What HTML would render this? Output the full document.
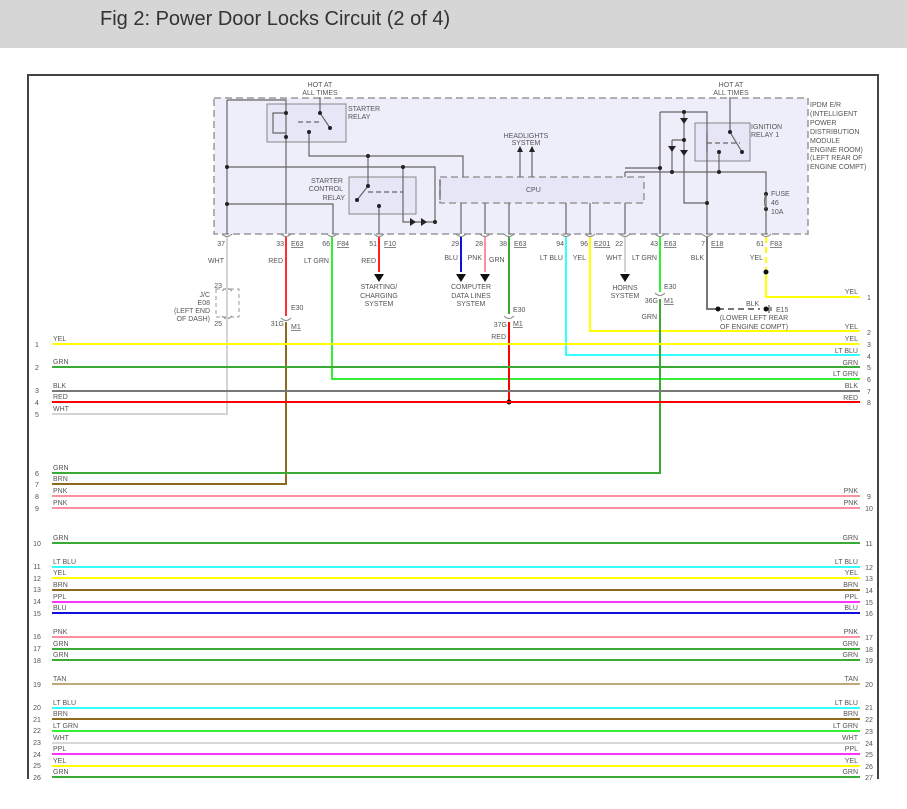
<!DOCTYPE html>
<html><head><meta charset="utf-8"><style>
html,body{margin:0;padding:0;background:#fff;width:907px;height:809px;overflow:hidden}
.hd{position:absolute;left:0;top:0;width:907px;height:48px;background:#d6d6d6}
.hd span{position:absolute;left:100px;top:8px;font:20px "Liberation Sans",sans-serif;color:#333}
svg{position:absolute;left:0;top:0}
text{font-family:"Liberation Sans",sans-serif;font-size:7px;fill:#555}
</style></head><body>
<div class="hd"><span>Fig 2: Power Door Locks Circuit (2 of 4)</span></div>
<svg width="907" height="809" viewBox="0 0 907 809">
<path d="M28,779 V75 H878 V779" fill="none" stroke="#444" stroke-width="2"/>
<rect x="214" y="98" width="594" height="136" fill="#eeeefa" stroke="#999" stroke-width="1.5" stroke-dasharray="7,4"/>
<rect x="440" y="177" width="204" height="26" fill="#e6e6f7" stroke="#999" stroke-width="1.5" stroke-dasharray="7,4"/>
<text x="526" y="192">CPU</text>
<rect x="267" y="104" width="79" height="38" fill="#e6e6f7" stroke="#888"/>
<rect x="349" y="177" width="67" height="37" fill="#e6e6f7" stroke="#888"/>
<rect x="695" y="123" width="55" height="38" fill="#e6e6f7" stroke="#888"/>
<g fill="none" stroke="#666" stroke-width="1.2">
<path d="M227,100 H286 V234 M227,100 V234"/>
<path d="M227,167 H435 V222 H403 V167 M227,204 H333 V234"/>
<path d="M309,132 V156 H463 V177 M368,156 V186 L357,200 M379,206 V234"/>
<path d="M320,97 V113 L330,128 M286,113 H273 V133 H286" />
<path d="M298,122 H322" stroke-dasharray="5,3"/>
<path d="M368,192 H403" stroke-dasharray="5,3"/>
<path d="M520,147 V177 M532,147 V177"/>
<path d="M461,203 V234 M485,203 V234 M509,203 V234 M566,203 V234 M590,203 V234 M625,203 V234 M625,172 V177"/>
<path d="M625,168 H660 M660,112 V234 M660,112 H707 V234 M684,112 V203 H707 M672,140 H684 M672,140 V172 M625,172 H766 V234"/>
<path d="M730,97 V132 L742,152 M719,152 V172 M707,132 V152"/>
<path d="M707,143 H740" stroke-dasharray="5,3"/>
<path d="M440,180 V200"/>
</g>
<g fill="#222">
<circle cx="286" cy="113" r="2"/><circle cx="286" cy="137" r="2"/><circle cx="309" cy="132" r="2"/><circle cx="320" cy="113" r="2"/><circle cx="330" cy="128" r="2"/>
<circle cx="227" cy="167" r="2"/><circle cx="227" cy="204" r="2"/><circle cx="368" cy="156" r="2"/><circle cx="403" cy="167" r="2"/><circle cx="435" cy="222" r="2"/>
<circle cx="368" cy="186" r="2"/><circle cx="357" cy="200" r="2"/><circle cx="379" cy="206" r="2"/>
<circle cx="684" cy="112" r="2"/><circle cx="684" cy="140" r="2"/><circle cx="660" cy="168" r="2"/><circle cx="672" cy="172" r="2"/><circle cx="719" cy="172" r="2"/><circle cx="707" cy="203" r="2"/>
<circle cx="730" cy="132" r="2"/><circle cx="742" cy="152" r="2"/><circle cx="719" cy="152" r="2"/>
<circle cx="766" cy="194" r="2"/><circle cx="766" cy="209" r="2"/>
<path d="M410,218 L416,222 L410,226Z M421,218 L427,222 L421,226Z M680,118 L688,118 L684,124Z M668,146 L676,146 L672,152Z M680,150 L688,150 L684,156Z"/>
<path d="M517,152 L520,146 L523,152Z M529,152 L532,146 L535,152Z"/>
</g>
<path d="M766,194 q-3,7 0,15" fill="none" stroke="#666"/>
<g fill="none" stroke="#888" stroke-width="1">
<path d="M222,234 q5,5 10,0 M281,234 q5,5 10,0 M327,234 q5,5 10,0 M374,234 q5,5 10,0 M456,234 q5,5 10,0 M480,234 q5,5 10,0 M504,234 q5,5 10,0 M561,234 q5,5 10,0 M585,234 q5,5 10,0 M620,234 q5,5 10,0 M655,234 q5,5 10,0 M702,234 q5,5 10,0 M761,234 q5,5 10,0"/>
<path d="M281,318 q5,5 10,0 M504,316 q5,5 10,0 M655,293 q5,5 10,0 M222,291 q5,-5 10,0 M222,316 q5,5 10,0"/>
</g>
<rect x="216" y="289" width="23" height="28" fill="none" stroke="#999" stroke-dasharray="4,3"/>
<g fill="none" stroke-width="2">
<path d="M227,237 V414 H52" stroke="#d4d4d4"/>
<path d="M286,237 V316" stroke="#ff3030"/>
<path d="M286,322 V484 H52" stroke="#8b6a1e"/>
<path d="M332,237 V379 H860" stroke="#33ee33"/>
<path d="M379,237 V272" stroke="#ff2020"/>
<path d="M461,237 V272" stroke="#1010dd"/>
<path d="M485,237 V272" stroke="#ff8fa3"/>
<path d="M509,237 V314" stroke="#3aaa35"/>
<path d="M509,322 V402" stroke="#ff0000"/>
<path d="M566,237 V355 H860" stroke="#33ffff"/>
<path d="M590,237 V331 H860" stroke="#ffff00"/>
<path d="M625,237 V272" stroke="#d4d4d4"/>
<path d="M660,237 V292" stroke="#33ee33"/>
<path d="M660,299 V473 H52" stroke="#3aaa35"/>
<path d="M707,237 V309 H718" stroke="#777"/>
<path d="M718,309 H760" stroke="#777" stroke-dasharray="6,4"/>
<path d="M766,237 V272" stroke="#ffff00" stroke-dasharray="6,4"/>
<path d="M766,272 V297 H860" stroke="#ffff00"/>
</g>
<g fill="#111">
<path d="M374,274 L384,274 L379,282Z M456,274 L466,274 L461,282Z M480,274 L490,274 L485,282Z M620,274 L630,274 L625,282Z"/>
<circle cx="509" cy="402" r="2.5"/><circle cx="766" cy="272" r="2.5"/><circle cx="718" cy="309" r="2.5"/><circle cx="766" cy="309" r="2.5"/>
</g>
<path d="M769,305 V313 M771,307 V311" stroke="#333"/>
<g stroke-width="2">
<path d="M52,344 H860" stroke="#ffff00"/>
<path d="M52,367 H860" stroke="#3aaa35"/>
<path d="M52,391 H860" stroke="#777"/>
<path d="M52,402 H860" stroke="#ff0000"/>
<path d="M52,496 H860" stroke="#ff8fa3"/>
<path d="M52,508 H860" stroke="#ff8fa3"/>
<path d="M52,543 H860" stroke="#3aaa35"/>
<path d="M52,567 H860" stroke="#33ffff"/>
<path d="M52,578 H860" stroke="#ffff00"/>
<path d="M52,590 H860" stroke="#8b6a1e"/>
<path d="M52,602 H860" stroke="#ff33ff"/>
<path d="M52,613 H860" stroke="#1010dd"/>
<path d="M52,637 H860" stroke="#ff8fa3"/>
<path d="M52,649 H860" stroke="#3aaa35"/>
<path d="M52,660 H860" stroke="#3aaa35"/>
<path d="M52,684 H860" stroke="#bba977"/>
<path d="M52,708 H860" stroke="#33ffff"/>
<path d="M52,719 H860" stroke="#8b6a1e"/>
<path d="M52,731 H860" stroke="#33ee33"/>
<path d="M52,743 H860" stroke="#d8d8d8"/>
<path d="M52,754 H860" stroke="#ff33ff"/>
<path d="M52,766 H860" stroke="#ffff00"/>
<path d="M52,777 H860" stroke="#3aaa35"/>
</g>
<g>
<text x="53" y="341">YEL</text><text x="53" y="364">GRN</text><text x="53" y="388">BLK</text><text x="53" y="399">RED</text><text x="53" y="411">WHT</text>
<text x="53" y="470">GRN</text><text x="53" y="481">BRN</text><text x="53" y="493">PNK</text><text x="53" y="505">PNK</text><text x="53" y="540">GRN</text>
<text x="53" y="564">LT BLU</text><text x="53" y="575">YEL</text><text x="53" y="587">BRN</text><text x="53" y="599">PPL</text><text x="53" y="610">BLU</text>
<text x="53" y="634">PNK</text><text x="53" y="646">GRN</text><text x="53" y="657">GRN</text><text x="53" y="681">TAN</text>
<text x="53" y="705">LT BLU</text><text x="53" y="716">BRN</text><text x="53" y="728">LT GRN</text><text x="53" y="740">WHT</text><text x="53" y="751">PPL</text><text x="53" y="763">YEL</text><text x="53" y="774">GRN</text>
<text x="489" y="262">GRN</text>
</g>
<g text-anchor="middle">
<text x="37" y="347">1</text><text x="37" y="370">2</text><text x="37" y="393">3</text><text x="37" y="405">4</text><text x="37" y="417">5</text><text x="37" y="476">6</text><text x="37" y="487">7</text><text x="37" y="499">8</text><text x="37" y="511">9</text><text x="37" y="546">10</text>
<text x="37" y="569">11</text><text x="37" y="581">12</text><text x="37" y="592">13</text><text x="37" y="604">14</text><text x="37" y="616">15</text><text x="37" y="639">16</text><text x="37" y="651">17</text><text x="37" y="663">18</text><text x="37" y="687">19</text>
<text x="37" y="710">20</text><text x="37" y="722">21</text><text x="37" y="733">22</text><text x="37" y="745">23</text><text x="37" y="757">24</text><text x="37" y="768">25</text><text x="37" y="780">26</text>
<text x="869" y="300">1</text><text x="869" y="335">2</text><text x="869" y="347">3</text><text x="869" y="359">4</text><text x="869" y="370">5</text><text x="869" y="382">6</text><text x="869" y="394">7</text><text x="869" y="405">8</text>
<text x="869" y="499">9</text><text x="869" y="511">10</text><text x="869" y="546">11</text><text x="869" y="570">12</text><text x="869" y="581">13</text><text x="869" y="593">14</text><text x="869" y="605">15</text><text x="869" y="616">16</text>
<text x="869" y="640">17</text><text x="869" y="652">18</text><text x="869" y="663">19</text><text x="869" y="687">20</text><text x="869" y="710">21</text><text x="869" y="722">22</text><text x="869" y="734">23</text><text x="869" y="746">24</text><text x="869" y="757">25</text><text x="869" y="769">26</text><text x="869" y="780">27</text>
</g>
<g text-anchor="end">
<text x="858" y="294">YEL</text><text x="858" y="329">YEL</text><text x="858" y="341">YEL</text><text x="858" y="353">LT BLU</text><text x="858" y="365">GRN</text><text x="858" y="376">LT GRN</text><text x="858" y="388">BLK</text><text x="858" y="400">RED</text>
<text x="858" y="493">PNK</text><text x="858" y="505">PNK</text><text x="858" y="540">GRN</text><text x="858" y="564">LT BLU</text><text x="858" y="575">YEL</text><text x="858" y="587">BRN</text><text x="858" y="599">PPL</text><text x="858" y="610">BLU</text>
<text x="858" y="634">PNK</text><text x="858" y="646">GRN</text><text x="858" y="657">GRN</text><text x="858" y="681">TAN</text><text x="858" y="705">LT BLU</text><text x="858" y="716">BRN</text><text x="858" y="728">LT GRN</text><text x="858" y="740">WHT</text><text x="858" y="751">PPL</text><text x="858" y="763">YEL</text><text x="858" y="774">GRN</text>
<text x="225" y="246">37</text><text x="284" y="246">33</text><text x="330" y="246">66</text><text x="377" y="246">51</text><text x="459" y="246">29</text><text x="483" y="246">28</text><text x="507" y="246">38</text><text x="564" y="246">94</text><text x="588" y="246">96</text><text x="623" y="246">22</text><text x="658" y="246">43</text><text x="705" y="246">7</text><text x="764" y="246">61</text>
<text x="224" y="263">WHT</text><text x="283" y="263">RED</text><text x="329" y="263">LT GRN</text><text x="376" y="263">RED</text><text x="458" y="260">BLU</text><text x="482" y="260">PNK</text>
<text x="563" y="260">LT BLU</text><text x="586" y="260">YEL</text><text x="622" y="260">WHT</text><text x="657" y="260">LT GRN</text><text x="704" y="260">BLK</text><text x="763" y="260">YEL</text>
<text x="284" y="326">31G</text><text x="507" y="327">37G</text><text x="658" y="303">36G</text><text x="506" y="339">RED</text><text x="657" y="319">GRN</text>
<text x="222" y="288">23</text><text x="222" y="326">25</text>
<text x="210" y="297">J/C</text><text x="210" y="305">E08</text><text x="210" y="313">(LEFT END</text><text x="210" y="321">OF DASH)</text>
<text x="343" y="183">STARTER</text><text x="343" y="191">CONTROL</text><text x="345" y="200">RELAY</text>
</g>
<g>
<text x="291" y="246" text-decoration="underline">E63</text><text x="337" y="246" text-decoration="underline">F84</text><text x="384" y="246" text-decoration="underline">F10</text><text x="514" y="246" text-decoration="underline">E63</text><text x="594" y="246" text-decoration="underline">E201</text><text x="664" y="246" text-decoration="underline">E63</text><text x="711" y="246" text-decoration="underline">E18</text><text x="770" y="246" text-decoration="underline">F83</text>
<text x="291" y="310">E30</text><text x="291" y="329" text-decoration="underline">M1</text><text x="513" y="312">E30</text><text x="513" y="326" text-decoration="underline">M1</text><text x="664" y="289">E30</text><text x="664" y="303" text-decoration="underline">M1</text>
<text x="348" y="111">STARTER</text><text x="348" y="119">RELAY</text>
<text x="751" y="129">IGNITION</text><text x="751" y="137">RELAY 1</text>
<text x="810" y="107">IPDM E/R</text><text x="810" y="116">(INTELLIGENT</text><text x="810" y="125">POWER</text><text x="810" y="134">DISTRIBUTION</text><text x="810" y="143">MODULE</text><text x="810" y="152">ENGINE ROOM)</text><text x="810" y="160">(LEFT REAR OF</text><text x="810" y="169">ENGINE COMPT)</text>
<text x="771" y="196">FUSE</text><text x="771" y="205">46</text><text x="771" y="214">10A</text>
<text x="746" y="306">BLK</text><text x="776" y="312">E15</text>
</g>
<g text-anchor="middle">
<text x="320" y="87">HOT AT</text><text x="320" y="95">ALL TIMES</text>
<text x="731" y="87">HOT AT</text><text x="731" y="95">ALL TIMES</text>
<text x="526" y="138">HEADLIGHTS</text><text x="526" y="145">SYSTEM</text>
<text x="379" y="289">STARTING/</text><text x="379" y="298">CHARGING</text><text x="379" y="306">SYSTEM</text>
<text x="471" y="289">COMPUTER</text><text x="471" y="298">DATA LINES</text><text x="471" y="306">SYSTEM</text>
<text x="625" y="290">HORNS</text><text x="625" y="298">SYSTEM</text>
<text x="754" y="320">(LOWER LEFT REAR</text><text x="754" y="329">OF ENGINE COMPT)</text>
</g>
</svg>
</body></html>
